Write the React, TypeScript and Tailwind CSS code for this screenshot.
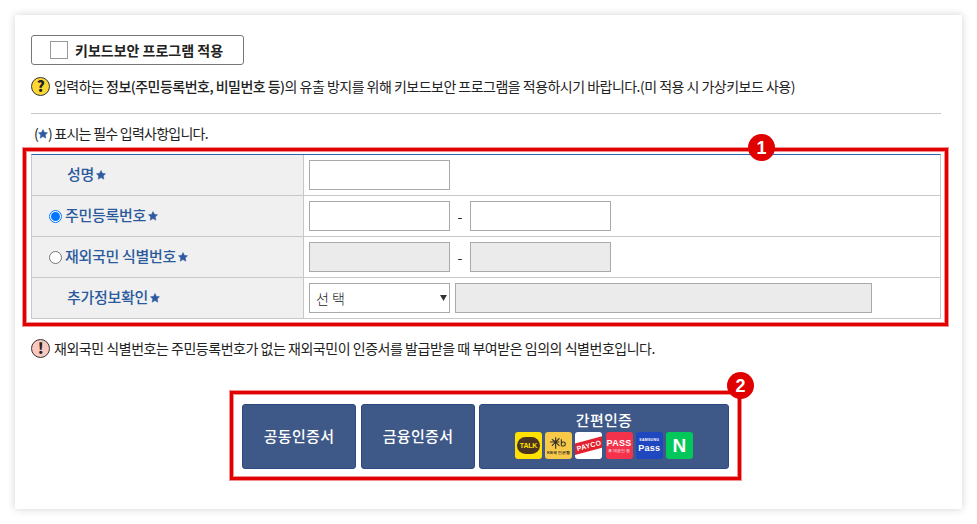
const KR = '[font-family:"Noto_Sans_CJK_KR","Liberation_Sans",sans-serif]';

function Star({ className = '' }: { className?: string }) {
  return (
    <svg viewBox="0 0 12 12" className={`inline-block h-[10px] w-[10px] fill-[#2f5aa0] stroke-[#2f5aa0] stroke-[0.6] ${className}`}>
      <path d="M6 0.6 7.6 4 11.4 4.5 8.7 7.1 9.4 11 6 9.1 2.6 11 3.3 7.1 0.6 4.5 4.4 4Z" />
    </svg>
  );
}

function Badge({ n, className }: { n: number; className: string }) {
  return (
    <span className={`absolute flex h-[27px] w-[27px] items-center justify-center rounded-full bg-[#e00000] text-[18px] leading-none font-black text-white [font-family:"Liberation_Sans",sans-serif] ${className}`}>
      {n}
    </span>
  );
}

function Field({ disabled, className = 'w-[141px]' }: { disabled?: boolean; className?: string }) {
  return <div className={`h-[30px] border border-[#aaaaaa] ${disabled ? 'bg-[#ebebeb]' : 'bg-white'} ${className}`} />;
}

function Radio({ on }: { on?: boolean }) {
  return (
    <span className={`mr-[3px] flex h-[13px] w-[13px] shrink-0 items-center justify-center rounded-full border bg-white ${on ? 'border-[#0075ff]' : 'border-[#767676]'}`}>
      {on && <span className="h-[9px] w-[9px] rounded-full bg-[#0075ff]" />}
    </span>
  );
}

function Row({ label, radio, on, pl, children }: { label: string; radio?: boolean; on?: boolean; pl: string; children: React.ReactNode }) {
  return (
    <div className="flex h-[41px] border-b border-[#c8c8c8]">
      <div className={`flex w-[272px] shrink-0 items-center border-r border-[#c8c8c8] bg-[#f0f0f0] text-[15px] font-medium tracking-[-0.3px] text-[#2a5a9c] ${pl}`}>
        {radio && <Radio on={on} />}
        <span className="-translate-y-px">{label}</span>
        <Star className="ml-[2px]" />
      </div>
      <div className="flex flex-1 items-center bg-white pl-[5px]">{children}</div>
    </div>
  );
}

function Tile({ className, children }: { className: string; children: React.ReactNode }) {
  return (
    <div className={`relative flex h-[27px] w-[27px] flex-col items-center justify-center overflow-hidden rounded-[3px] ${className}`}>
      {children}
    </div>
  );
}

function SimpleLogos() {
  return (
    <div className="mt-[2px] flex gap-[3.2px] [font-family:'Liberation_Sans',sans-serif]">
      <Tile className="bg-[#ffe100]">
        <span className="flex h-[17px] w-[23px] items-center justify-center rounded-full bg-[#4a3420] text-[7px] font-bold tracking-[-0.2px] text-[#ffe100]">TALK</span>
      </Tile>
      <Tile className="bg-[#f7c948]">
        <svg viewBox="0 0 20 14" className="h-[14px] w-[19px] fill-none stroke-[#3a3428] stroke-[1.2]">
          <path d="M3 3 7 6 3 10M7 1V13M7 6 11 2M7 6 11 10M1 6H11M13 3V10M13 7C15 5 18 6 17 9C16 11 14 10 13 10" />
        </svg>
        <span className="text-[4px] leading-[5px] font-bold text-[#3a3428]">KB국민은행</span>
      </Tile>
      <Tile className="bg-white">
        <span className="w-[36px] -rotate-[15deg] bg-[#e5202e] text-center text-[7px] leading-[11px] font-bold whitespace-nowrap text-white">PAYCO</span>
      </Tile>
      <Tile className="bg-[#f5324b]">
        <span className="text-[9px] leading-[10px] font-bold text-white">PASS</span>
        <span className="text-[4px] leading-[6px] text-white">휴대폰인증</span>
      </Tile>
      <Tile className="bg-[#1f48c0]">
        <span className="text-[3.5px] leading-[5px] font-bold text-white">SAMSUNG</span>
        <span className="text-[9px] leading-[10px] font-bold text-white">Pass</span>
      </Tile>
      <Tile className="bg-[#03c75a]">
        <span className="text-[19px] leading-none font-black text-white">N</span>
      </Tile>
    </div>
  );
}

export default function App() {
  return (
    <div className={`min-h-[524px] bg-white p-[15px] text-[14px] text-[#222222] ${KR}`}>
      <div className="h-[494px] w-[947px] bg-white pt-[20px] pr-[21px] pl-[16px] shadow-[0_0_8px_rgba(0,0,0,0.18)]">
        <div className="flex h-[30px] w-[213px] items-center rounded-[3px] border border-[#777777] pl-[18px]">
          <span className="h-[18px] w-[18px] border border-[#999999] bg-white" />
          <span className="ml-[7px] text-[14px] font-bold">키보드보안 프로그램 적용</span>
        </div>

        <div className="mt-[11px] flex h-[20px] items-center tracking-[-0.52px]">
          <span className="mr-[4px] flex h-[19px] w-[19px] shrink-0 items-center justify-center rounded-full border border-[#333333] bg-[#fdd835] text-[15px] font-black text-[#222222]">?</span>
          <span className="whitespace-nowrap">입력하는 <span className="font-medium">정보(주민등록번호, 비밀번호 등)</span>의 유출 방지를 위해 키보드보안 프로그램을 적용하시기 바랍니다.(미 적용 시 가상키보드 사용)</span>
        </div>

        <div className="mt-[17px] h-px bg-[#c8c8c8]" />

        <div className="mt-[10px] flex h-[19px] items-center pl-[3px] tracking-[-0.75px]">
          (<Star />)&nbsp;표시는 필수 입력사항입니다.
        </div>

        <div className="relative -mr-[7px] -ml-[8px] mt-[5px] border-[3px] border-[#e00000] pt-[3px] pr-[4px] pb-[4px] pl-[5px] shadow-[0_0_0_1px_#f09090,inset_0_0_0_1px_#f09090]">
          <Badge n={1} className="top-[-17px] left-[722px]" />
          <div className="border-x border-t border-x-[#c8c8c8] border-t-[#2f62b0]">
            <Row label="성명" pl="pl-[35px]">
              <Field />
            </Row>
            <Row label="주민등록번호" radio on pl="pl-[17px]">
              <Field />
              <span className="w-[20px] text-center">-</span>
              <Field />
            </Row>
            <Row label="재외국민 식별번호" radio pl="pl-[17px]">
              <Field disabled />
              <span className="w-[20px] text-center">-</span>
              <Field disabled />
            </Row>
            <Row label="추가정보확인" pl="pl-[35px]">
              <div className="relative flex h-[30px] w-[141px] items-center border border-[#aaaaaa] bg-white pl-[6px] text-[14px] font-light">
                선 택
                <svg viewBox="0 0 8 7" className="absolute right-[2px] h-[6px] w-[7px] fill-[#333333]">
                  <path d="M0 0H8L4 7Z" />
                </svg>
              </div>
              <Field disabled className="ml-[5px] w-[417px]" />
            </Row>
          </div>
        </div>

        <div className="mt-[12px] flex h-[20px] items-center tracking-[-0.47px]">
          <span className="mr-[4px] flex h-[19px] w-[19px] shrink-0 items-center justify-center rounded-full border border-[#333333] bg-[#fbc8c0] text-[15px] font-black text-[#222222]">!</span>
          <span className="whitespace-nowrap">재외국민 식별번호는 주민등록번호가 없는 재외국민이 인증서를 발급받을 때 부여받은 임의의 식별번호입니다.</span>
        </div>

        <div className="relative mt-[33px] ml-[199px] flex h-[89px] w-[511px] gap-[5px] border-[3px] border-[#e00000] pt-[10px] pl-[9px] shadow-[0_0_0_1px_#f09090,inset_0_0_0_1px_#f09090]">
          <Badge n={2} className="top-[-22px] left-[494px]" />
          <div className="flex h-[65px] w-[114px] items-center justify-center rounded-[3px] border border-[#2c4a80] bg-[#3e5888] text-[15px] font-medium tracking-[0.3px] text-white">공동인증서</div>
          <div className="flex h-[65px] w-[114px] items-center justify-center rounded-[3px] border border-[#2c4a80] bg-[#3e5888] text-[15px] font-medium tracking-[0.3px] text-white">금융인증서</div>
          <div className="-ml-px flex h-[65px] w-[250px] flex-col items-center rounded-[3px] border border-[#2c4a80] bg-[#3e5888] pt-[5px] text-[15px] leading-[20px] font-medium tracking-[0.3px] text-white">
            간편인증
            <SimpleLogos />
          </div>
        </div>
      </div>
    </div>
  );
}
